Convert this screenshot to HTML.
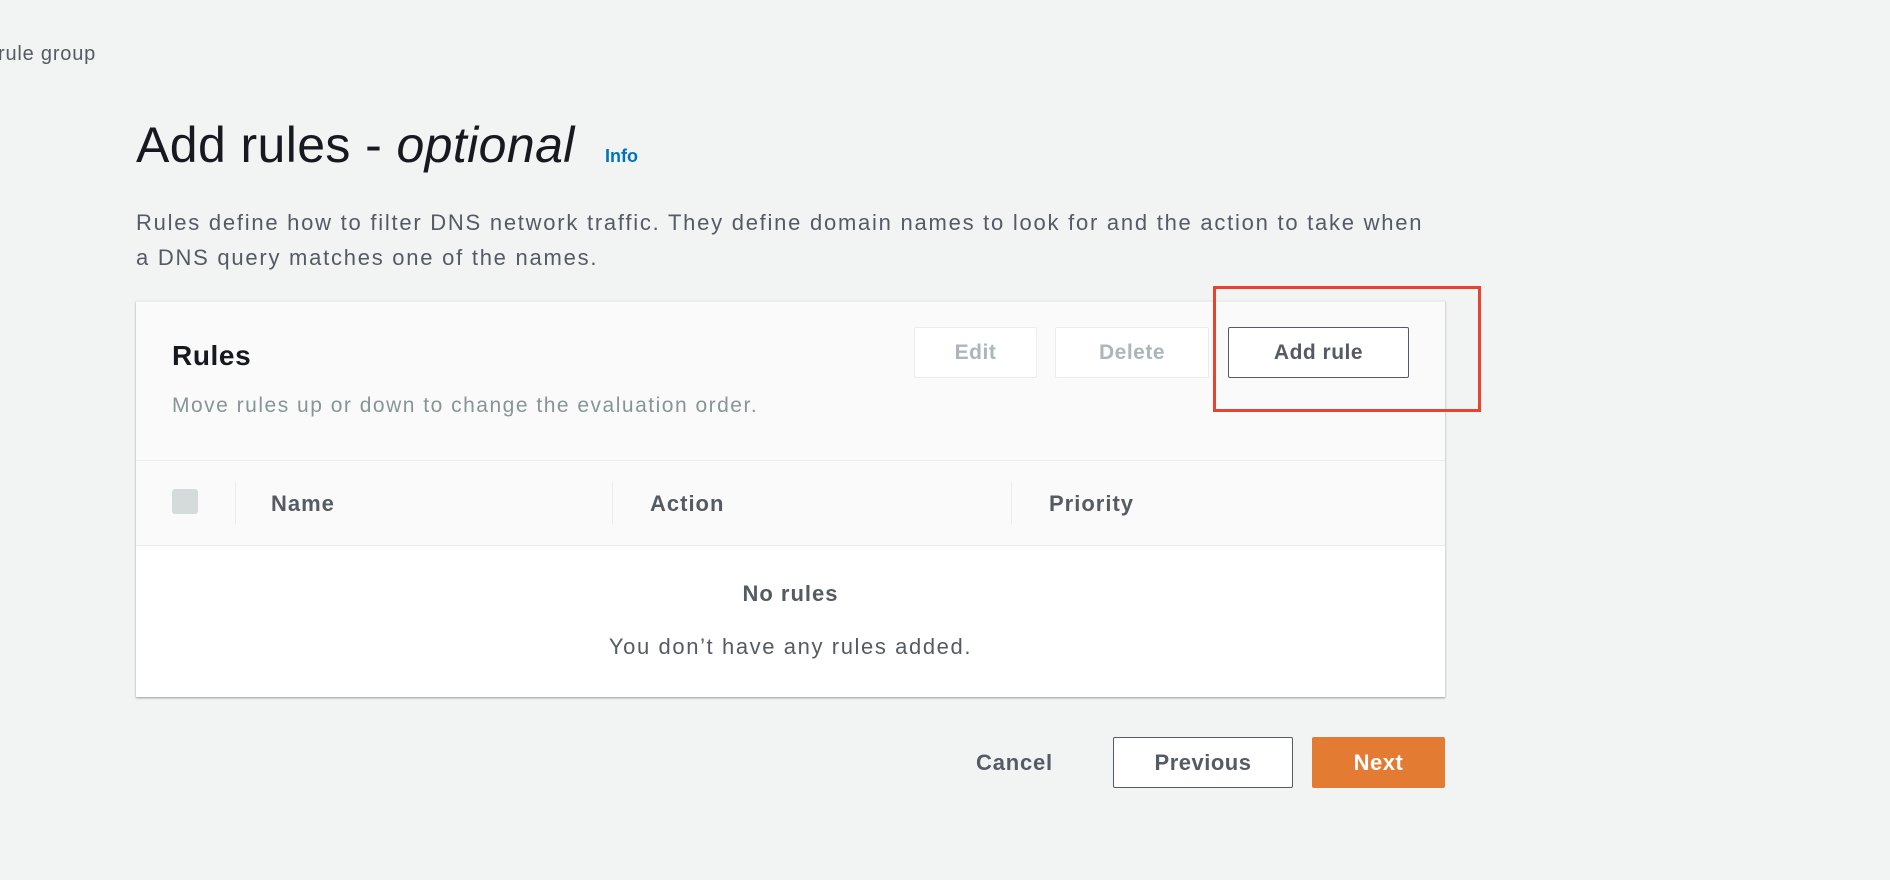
<!DOCTYPE html>
<html><head><meta charset="utf-8"><style>
*{box-sizing:border-box;margin:0;padding:0}
body{width:1890px;height:880px;background:#f2f3f3;font-family:"Liberation Sans",sans-serif;position:relative;overflow:hidden;color:#16191f}
.a{position:absolute;white-space:nowrap}
.btn{position:absolute;border:1px solid #aab7b8;background:#fff;border-radius:2px;font-weight:bold;font-size:21px;letter-spacing:0.5px;display:flex;align-items:center;justify-content:center}
</style></head><body>
<div class="a" style="left:-2px;top:43px;font-size:20px;letter-spacing:0.8px;color:#545b64">rule group</div>
<div class="a" style="left:136px;top:116px;font-size:50px;letter-spacing:0.4px;color:#16191f">Add rules - <i>optional</i></div>
<div class="a" style="left:605px;top:146px;font-size:18px;font-weight:bold;color:#0073bb">Info</div>
<div class="a" style="left:136px;top:205px;font-size:22px;letter-spacing:1.75px;line-height:35px;color:#545b64">Rules define how to filter DNS network traffic. They define domain names to look for and the action to take when<br>a DNS query matches one of the names.</div>
<div class="a" style="left:136px;top:301px;width:1309px;height:396px;background:#fff;box-shadow:0 1px 2px rgba(0,28,36,.4);border-top:1px solid #eaeded">
 <div style="position:absolute;left:0;top:0;width:100%;height:244px;background:#fafafa;border-bottom:1px solid #eaeded"></div>
 <div style="position:absolute;left:0;top:158px;width:100%;height:1px;background:#eaeded"></div>
 <div class="a" style="left:36px;top:38px;font-size:28px;letter-spacing:0.6px;font-weight:bold">Rules</div>
 <div class="a" style="left:36px;top:92px;font-size:21px;letter-spacing:1.5px;color:#879596">Move rules up or down to change the evaluation order.</div>
 <div style="position:absolute;left:36px;top:187px;width:26px;height:25px;background:#d5dbdb;border-radius:3px"></div>
 <div style="position:absolute;left:99px;top:180px;width:1px;height:42px;background:#eaeded"></div>
 <div style="position:absolute;left:476px;top:180px;width:1px;height:42px;background:#eaeded"></div>
 <div style="position:absolute;left:875px;top:180px;width:1px;height:42px;background:#eaeded"></div>
 <div class="a" style="left:135px;top:189px;font-size:22px;letter-spacing:1px;font-weight:bold;color:#545b64">Name</div>
 <div class="a" style="left:514px;top:189px;font-size:22px;letter-spacing:1px;font-weight:bold;color:#545b64">Action</div>
 <div class="a" style="left:913px;top:189px;font-size:22px;letter-spacing:1px;font-weight:bold;color:#545b64">Priority</div>
 <div class="a" style="left:0;width:100%;text-align:center;top:279px;font-size:22px;letter-spacing:1px;font-weight:bold;color:#545b64">No rules</div>
 <div class="a" style="left:0;width:100%;text-align:center;top:332px;font-size:22px;letter-spacing:1.6px;color:#545b64">You don’t have any rules added.</div>
</div>
<div class="btn" style="left:914px;top:327px;width:123px;height:51px;color:#aab7b8;border-color:#eaeded">Edit</div>
<div class="btn" style="left:1055px;top:327px;width:154px;height:51px;color:#aab7b8;border-color:#eaeded">Delete</div>
<div class="btn" style="left:1228px;top:327px;width:181px;height:51px;color:#545b64;border-color:#545b64">Add rule</div>
<div style="position:absolute;left:1213px;top:286px;width:268px;height:126px;border:3px solid #e8432e"></div>
<div class="a" style="left:976px;top:750px;font-size:22px;letter-spacing:0.8px;font-weight:bold;color:#545b64">Cancel</div>
<div class="btn" style="left:1113px;top:737px;width:180px;height:51px;color:#545b64;border-color:#545b64;font-size:22px">Previous</div>
<div class="btn" style="left:1312px;top:737px;width:133px;height:51px;color:#fff;background:#e37b33;border-color:#e37b33;font-size:22px">Next</div>
</body></html>
